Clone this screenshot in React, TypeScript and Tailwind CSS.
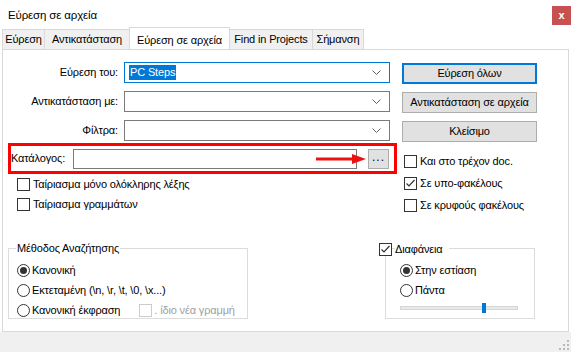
import React from 'react'

function Chevron() {
  return (
    <svg width="9" height="5" viewBox="0 0 9 5" className="shrink-0">
      <path d="M0.5 0.5 L4.5 4.5 L8.5 0.5" fill="none" stroke="#606060" strokeWidth="1" />
    </svg>
  )
}

function Combo({ focused, value }: { focused?: boolean; value?: string }) {
  return (
    <div
      className={
        'w-[266px] h-[21px] bg-white border flex items-center pl-[4px] pr-[8px] ' +
        (focused ? 'border-[#0078d7]' : 'border-[#7a7a7a]')
      }
    >
      <div className="flex-1 flex items-center">
        {value && <span className="bg-[#0078d7] text-white leading-[15px] px-[1px]">{value}</span>}
      </div>
      <Chevron />
    </div>
  )
}

function Check({ checked, disabled }: { checked?: boolean; disabled?: boolean }) {
  return (
    <span
      className={
        'w-[13px] h-[13px] border bg-white flex items-center justify-center shrink-0 ' +
        (disabled ? 'border-[#cccccc]' : 'border-[#333333]')
      }
    >
      {checked && (
        <svg width="11" height="11" viewBox="0 0 11 11">
          <path d="M1.5 5.5 L4 8 L9.5 2" fill="none" stroke="#333333" strokeWidth="1.2" />
        </svg>
      )}
    </span>
  )
}

function Radio({ checked }: { checked?: boolean }) {
  return (
    <span className="w-[13px] h-[13px] rounded-full border border-[#333333] bg-white flex items-center justify-center shrink-0">
      {checked && <span className="w-[7px] h-[7px] rounded-full bg-[#333333]" />}
    </span>
  )
}

function CheckRow({ label, checked }: { label: string; checked?: boolean }) {
  return (
    <div className="flex items-center gap-[3px] h-[13px]">
      <Check checked={checked} />
      <span className="leading-none">{label}</span>
    </div>
  )
}

function RadioRow({ label, checked, children }: { label: string; checked?: boolean; children?: React.ReactNode }) {
  return (
    <div className="flex items-center gap-[2px] h-[14px]">
      <Radio checked={checked} />
      <span className="leading-none">{label}</span>
      {children}
    </div>
  )
}

function Btn({ label, primary }: { label: string; primary?: boolean }) {
  return (
    <div
      className={
        'w-[135px] h-[21px] bg-[#e1e1e1] flex items-center justify-center ' +
        (primary ? 'border-2 border-[#0078d7]' : 'border border-[#adadad]')
      }
    >
      {label}
    </div>
  )
}

// καρτέλες με το πλάτος τους
const tabs: [string, string][] = [
  ['Εύρεση', 'w-[43px]'],
  ['Αντικατάσταση', 'w-[86px]'],
  ['Εύρεση σε αρχεία', 'w-[101px]'],
  ['Find in Projects', 'w-[84px]'],
  ['Σήμανση', 'w-[52px]'],
]

export default function App() {
  return (
    <div className="w-[571px] h-[352px] bg-white overflow-hidden flex flex-col text-[11px] tracking-[-0.15px] whitespace-nowrap text-black font-['Liberation_Sans',sans-serif]">
      {/* Τίτλος */}
      <div className="h-[28px] flex items-start justify-between shrink-0">
        <span className="ml-[8px] mt-[8px] leading-[14px] text-[11.5px]">Εύρεση σε αρχεία</span>
        <div className="mt-[6px] w-[19px] h-[19px] bg-[#c75050] text-white font-bold text-[11px] flex items-center justify-center leading-none">
          x
        </div>
      </div>

      {/* Καρτέλες */}
      <div className="h-[21px] flex items-end pl-[2px] shrink-0 relative z-10">
        {tabs.map(([t, w], i) =>
          i === 2 ? (
            <div
              key={t}
              className={'h-[22px] bg-white border border-b-0 border-[#d9d9d9] flex justify-center pt-[4px] -ml-[1px] ' + w}
            >
              {t}
            </div>
          ) : (
            <div
              key={t}
              className={
                'h-[20px] bg-[#f0f0f0] border border-b-0 border-[#d9d9d9] flex items-center justify-center ' +
                w +
                (i > 0 ? ' -ml-[1px]' : '')
              }
            >
              {t}
            </div>
          )
        )}
      </div>

      {/* Περιεχόμενο */}
      <div className="mx-[2px] h-[283px] border border-[#d9d9d9] shrink-0 flex flex-col">
        <div className="flex">
          {/* Αριστερή στήλη */}
          <div className="w-[398px] flex flex-col">
            <div className="flex items-center mt-[12px]">
              <span className="w-[115px] text-right mr-[6px]">Εύρεση του:</span>
              <Combo focused value="PC Steps" />
            </div>
            <div className="flex items-center mt-[8px]">
              <span className="w-[115px] text-right mr-[6px]">Αντικατάσταση με:</span>
              <Combo />
            </div>
            <div className="flex items-center mt-[8px]">
              <span className="w-[115px] text-right mr-[6px]">Φίλτρα:</span>
              <Combo />
            </div>

            <div className="ml-[5px] mt-[2px] w-[389px] h-[31px] border-[3px] border-[#ff0000] flex items-center">
              <span className="w-[62px]">Κατάλογος:</span>
              <div className="w-[284px] h-[20px] border border-[#7a7a7a] bg-white relative">
                <svg width="52" height="10" viewBox="0 0 52 10" className="absolute left-[242px] top-[4px] overflow-visible">
                  <line x1="0" y1="5" x2="40" y2="5" stroke="#ee1111" strokeWidth="3" />
                  <path d="M36 0 L50 5 L36 10 Z" fill="#ee1111" />
                </svg>
              </div>
              <div className="ml-[11px] w-[21px] h-[20px] bg-[#e1e1e1] border border-[#adadad] flex items-end justify-center leading-none pb-[5px] text-[12px] tracking-[1px]">
                ...
              </div>
            </div>

            <div className="ml-[14px] mt-[4px] flex flex-col gap-[7px]">
              <CheckRow label="Ταίριασμα μόνο ολόκληρης λέξης" />
              <CheckRow label="Ταίριασμα γραμμάτων" />
            </div>
          </div>

          {/* Δεξιά στήλη */}
          <div className="ml-[1px] flex flex-col">
            <div className="mt-[13px] flex flex-col gap-[8px]">
              <Btn label="Εύρεση όλων" primary />
              <Btn label="Αντικατάσταση σε αρχεία" />
              <Btn label="Κλείσιμο" />
            </div>
            <div className="ml-[2px] mt-[13px] flex flex-col gap-[9px]">
              <CheckRow label="Και στο τρέχον doc." />
              <CheckRow label="Σε υπο-φακέλους" checked />
              <CheckRow label="Σε κρυφούς φακέλους" />
            </div>
          </div>
        </div>

        {/* Κάτω ομάδες */}
        <div className="flex mt-[36px]">
          <div className="ml-[5px] w-[240px] h-[71px] border border-[#dcdcdc] relative">
            <span className="absolute -top-[8px] left-[7px] bg-white px-[1px] leading-[14px]">Μέθοδος Αναζήτησης</span>
            <div className="ml-[8px] mt-[14px] flex flex-col gap-[6px]">
              <RadioRow label="Κανονική" checked />
              <RadioRow label="Εκτεταμένη (\n, \r, \t, \0, \x...)" />
              <RadioRow label="Κανονική έκφραση">
                <span className="ml-[17px] flex items-center gap-[2px] text-[#a0a0a0]">
                  <Check disabled />
                  <span className="leading-none">. ίδιο νέα γραμμή</span>
                </span>
              </RadioRow>
            </div>
          </div>

          <div className="ml-[131px] -mt-[5px] flex flex-col">
            <div className="flex items-center gap-[3px] h-[13px] relative z-10">
              <Check checked />
              <span className="bg-white pr-[6px] leading-none">Διαφάνεια</span>
            </div>
            <div className="ml-[6px] -mt-[8px] w-[150px] h-[71px] border border-[#dcdcdc] flex flex-col pl-[14px] pt-[14px]">
              <div className="flex flex-col gap-[6px]">
                <RadioRow label="Στην εστίαση" checked />
                <RadioRow label="Πάντα" />
              </div>
              <div className="mt-[6px] w-[118px] h-[10px] relative flex items-center">
                <div className="w-full h-[4px] bg-[#e7eaea] border border-[#d6d6d6]" />
                <div className="absolute left-[82px] top-0 w-[4px] h-[10px] bg-[#0078d7]" />
              </div>
            </div>
          </div>
        </div>
      </div>

      {/* Κάτω γραμμή */}
      <div className="flex-1 bg-[#f0f0f0] relative">
        <svg width="12" height="12" viewBox="0 0 12 12" className="absolute right-[1px] bottom-[1px]">
          {[
            [9, 1],
            [9, 5],
            [5, 5],
            [9, 9],
            [5, 9],
            [1, 9],
          ].map(([x, y]) => (
            <rect key={`${x}-${y}`} x={x} y={y} width="2" height="2" fill="#b8b8b8" />
          ))}
        </svg>
      </div>
    </div>
  )
}
